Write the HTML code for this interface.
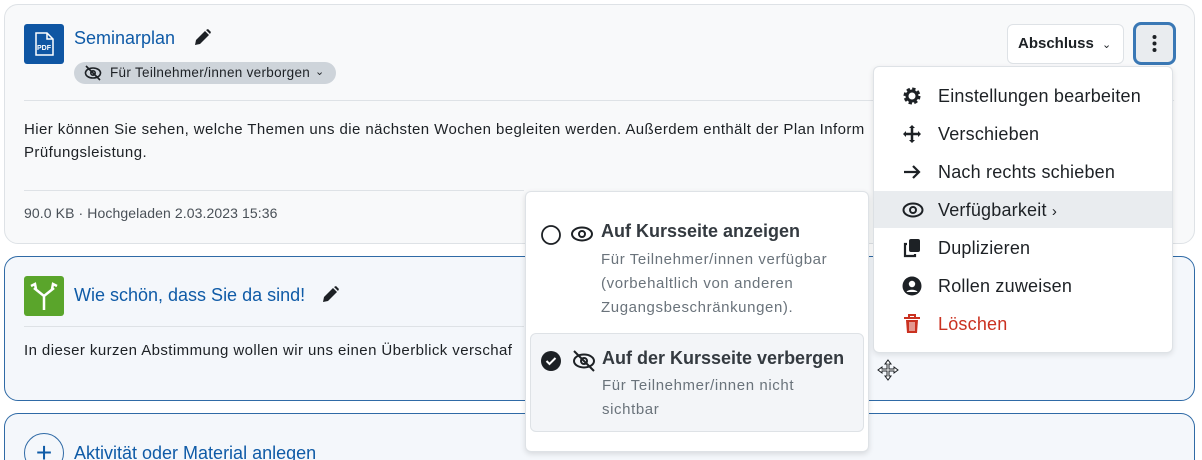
<!DOCTYPE html>
<html style="width:1202px;height:460px;overflow:hidden"><head><meta charset="utf-8"><style>
*{box-sizing:border-box;margin:0;padding:0}
body{width:1202px;height:460px;overflow:hidden;background:#fff;font-family:"Liberation Sans",sans-serif;color:#1d2125;font-size:15px;position:relative}
.abs{position:absolute}
.card{position:absolute;left:4px;width:1191px;border-radius:14px}
.link{color:#0f5ba7;font-size:18px}
.hr{position:absolute;height:1px;background:#dee2e6}
.mi{position:absolute;left:873px;width:299px;height:38px;font-size:18px;line-height:38px;padding-left:65px;color:#1d2125;letter-spacing:0.2px}
.mi svg{position:absolute;left:29px;top:9px}
</style></head><body>
<div class="card" style="top:4px;height:240px;background:#f8f9fa;border:1px solid #dee2e6"></div>
<div class="card" style="top:256px;height:145px;background:#f4f7fb;border:1px solid #2f6aa6"></div>
<div class="card" style="top:413px;height:47px;background:#f4f7fb;border:1px solid #2f6aa6;border-bottom:none;border-radius:14px 14px 0 0"></div>

<!-- card1 -->
<div class="abs" style="left:24px;top:24px;width:40px;height:40px;background:#0f56a3;border-radius:3px">
<svg width="40" height="40"><path d="M12 9h11l6 6v16h-17z" fill="none" stroke="#fff" stroke-width="1.5"/><path d="M23 9v6h6" fill="none" stroke="#fff" stroke-width="1.5"/><text x="20" y="26" fill="#fff" font-size="7" font-weight="bold" text-anchor="middle" font-family="Liberation Sans">PDF</text></svg></div>
<div class="abs link" style="left:74px;top:28px">Seminarplan</div>
<svg class="abs" style="left:192px;top:28px" width="20" height="20" viewBox="0 0 20 20"><path d="M3 17l1-5 9-9 4 4-9 9z M14 2l2-1 3 3-1 2z" fill="#1d2125"/></svg>
<div class="abs" style="left:74px;top:62px;width:262px;height:22px;border-radius:11px;background:#ced4da;font-size:13.5px;line-height:22px;padding-left:36px;color:#1d2125;letter-spacing:0.3px">Für Teilnehmer/innen verborgen<span style="position:absolute;left:241px;top:-1px;font-size:11px">&#8964;</span></div>
<svg class="abs" style="left:84px;top:65px" width="18" height="16" viewBox="0 0 18 16"><ellipse cx="9" cy="8" rx="7.5" ry="5" fill="none" stroke="#1d2125" stroke-width="1.6"/><circle cx="9" cy="8" r="2.2" fill="none" stroke="#1d2125" stroke-width="1.6"/><path d="M2 1l14 14" stroke="#1d2125" stroke-width="1.6"/></svg>
<div class="hr" style="left:24px;top:100px;width:1150px"></div>
<div class="abs" style="left:24px;top:118px;line-height:23px;width:860px;white-space:nowrap;letter-spacing:0.42px">Hier können Sie sehen, welche Themen uns die nächsten Wochen begleiten werden. Außerdem enthält der Plan Inform<br>Prüfungsleistung.</div>
<div class="hr" style="left:24px;top:190px;width:500px"></div>
<div class="abs" style="left:24px;top:205px;font-size:14px;color:#495057;letter-spacing:0.1px">90.0 KB · Hochgeladen 2.03.2023 15:36</div>

<div class="abs" style="left:1007px;top:24px;width:117px;height:40px;border:1px solid #dee2e6;border-radius:6px;background:#fff;font-weight:bold;line-height:38px;padding-left:10px;font-size:15px">Abschluss <span style="font-weight:normal;font-size:11px;margin-left:4px">&#8964;</span></div>
<div class="abs" style="left:1133px;top:22px;width:43px;height:43px;border:3px solid #3a78b5;border-radius:8px;background:#e9ecef">
<svg width="37" height="37"><circle cx="18.5" cy="12" r="2" fill="#1d2125"/><circle cx="18.5" cy="18.5" r="2" fill="#1d2125"/><circle cx="18.5" cy="25" r="2" fill="#1d2125"/></svg></div>

<!-- card2 -->
<div class="abs" style="left:24px;top:276px;width:40px;height:40px;background:#5aa52b;border-radius:3px">
<svg width="40" height="40"><path d="M20 34V20L10 12M20 20l10-8M7 10l4-2 1 5M33 10l-4-2-1 5" fill="none" stroke="#fff" stroke-width="2.5"/></svg></div>
<div class="abs link" style="left:74px;top:285px">Wie schön, dass Sie da sind!</div>
<svg class="abs" style="left:320px;top:285px" width="20" height="20" viewBox="0 0 20 20"><path d="M3 17l1-5 9-9 4 4-9 9z M14 2l2-1 3 3-1 2z" fill="#1d2125"/></svg>
<div class="hr" style="left:24px;top:326px;width:500px"></div>
<div class="abs" style="left:24px;top:342px;white-space:nowrap;letter-spacing:0.42px">In dieser kurzen Abstimmung wollen wir uns einen Überblick verschaf</div>
<div class="abs" style="left:24px;top:433px;width:40px;height:40px;border:1px solid #2f6aa6;border-radius:50%;color:#0f5ba7;font-size:28px;text-align:center;line-height:38px">+</div>
<div class="abs link" style="left:74px;top:443px">Aktivität oder Material anlegen</div>

<!-- menu -->
<div class="abs" style="left:873px;top:66px;width:300px;height:287px;background:#fff;border:1px solid #dee2e6;border-radius:6px;box-shadow:0 2px 6px rgba(0,0,0,.1)"></div>
<div class="abs" style="left:874px;top:191px;width:298px;height:37px;background:#e9ecef"></div>
<div class="mi" style="top:77px"><svg width="20" height="20" viewBox="0 0 20 20"><circle cx="10" cy="10" r="6.5" fill="none" stroke="#1d2125" stroke-width="4" stroke-dasharray="3 2.1"/><circle cx="10" cy="10" r="5" fill="none" stroke="#1d2125" stroke-width="3"/></svg>Einstellungen bearbeiten</div>
<div class="mi" style="top:115px"><svg width="20" height="20" viewBox="0 0 20 20"><path d="M10 1l3 3H7zM10 19l3-3H7zM1 10l3-3v6zM19 10l-3-3v6z" fill="#1d2125"/><path d="M10 3v14M3 10h14" stroke="#1d2125" stroke-width="2.5"/></svg>Verschieben</div>
<div class="mi" style="top:153px"><svg width="20" height="20" viewBox="0 0 20 20"><path d="M2 10h15M11 4l6 6-6 6" fill="none" stroke="#1d2125" stroke-width="2.2"/></svg>Nach rechts schieben</div>
<div class="mi" style="top:191px"><svg width="22" height="20" viewBox="0 0 22 20"><ellipse cx="11" cy="10" rx="9.5" ry="6.5" fill="none" stroke="#1d2125" stroke-width="2"/><circle cx="11" cy="10" r="3" fill="none" stroke="#1d2125" stroke-width="2"/></svg>Verfügbarkeit <span style="font-size:15px">›</span></div>
<div class="mi" style="top:229px"><svg width="20" height="20" viewBox="0 0 20 20"><rect x="7" y="1" width="11" height="13" rx="2" fill="#1d2125"/><path d="M5 6H3v12h10v-2" fill="none" stroke="#1d2125" stroke-width="2.2"/></svg>Duplizieren</div>
<div class="mi" style="top:267px"><svg width="20" height="20" viewBox="0 0 20 20"><circle cx="10" cy="10" r="9.5" fill="#1d2125"/><circle cx="10" cy="8" r="3.2" fill="#fff"/><path d="M4.5 16c1.5-3 9.5-3 11 0" fill="#fff"/></svg>Rollen zuweisen</div>
<div class="mi" style="top:305px;color:#ca3120"><svg width="20" height="20" viewBox="0 0 20 20"><path d="M2 4h16M7 3V1h6v2" stroke="#ca3120" stroke-width="2" fill="none"/><path d="M4 6h12l-1 13H5z" fill="#ca3120"/><path d="M8 8v9M10 8v9M12 8v9" stroke="#fff" stroke-width="1"/></svg>Löschen</div>

<!-- submenu -->
<div class="abs" style="left:525px;top:191px;width:344px;height:261px;background:#fff;border:1px solid #dee2e6;border-radius:6px;box-shadow:0 2px 6px rgba(0,0,0,.12)"></div>
<div class="abs" style="left:530px;top:333px;width:334px;height:99px;background:#f3f5f8;border:1px solid #dee2e6;border-radius:6px"></div>
<svg class="abs" style="left:540px;top:224px" width="22" height="22"><circle cx="11" cy="11" r="9" fill="none" stroke="#1d2125" stroke-width="1.8"/></svg>
<svg class="abs" style="left:570px;top:224px" width="24" height="20" viewBox="0 0 24 20"><ellipse cx="12" cy="10" rx="10" ry="6.5" fill="none" stroke="#1d2125" stroke-width="2"/><circle cx="12" cy="10" r="3" fill="none" stroke="#1d2125" stroke-width="2"/></svg>
<div class="abs" style="left:601px;top:221px;font-weight:bold;font-size:18px;color:#343a40">Auf Kursseite anzeigen</div>
<div class="abs" style="left:601px;top:248px;font-size:15px;line-height:24px;color:#6a737b;letter-spacing:0.6px;white-space:nowrap">Für Teilnehmer/innen verfügbar<br>(vorbehaltlich von anderen<br>Zugangsbeschränkungen).</div>
<svg class="abs" style="left:540px;top:350px" width="22" height="22"><circle cx="11" cy="11" r="10" fill="#1d2125"/><path d="M6.5 11l3 3 6-6" fill="none" stroke="#fff" stroke-width="2"/></svg>
<svg class="abs" style="left:571px;top:349px" width="26" height="24" viewBox="0 0 26 24"><ellipse cx="13" cy="12" rx="10" ry="6.5" fill="none" stroke="#1d2125" stroke-width="2"/><circle cx="13" cy="12" r="3" fill="none" stroke="#1d2125" stroke-width="2"/><path d="M3 2l20 20" stroke="#1d2125" stroke-width="2"/></svg>
<div class="abs" style="left:602px;top:348px;font-weight:bold;font-size:18px;color:#343a40">Auf der Kursseite verbergen</div>
<div class="abs" style="left:602px;top:374px;font-size:15px;line-height:24px;color:#6a737b;letter-spacing:0.6px;white-space:nowrap">Für Teilnehmer/innen nicht<br>sichtbar</div>
<svg class="abs" style="left:876px;top:358px" width="24" height="24" viewBox="0 0 24 24"><path d="M12 2l3 4h-2v5h5V9l4 3-4 3v-2h-5v5h2l-3 4-3-4h2v-5H6v2l-4-3 4-3v2h5V6H9z" fill="#fff" stroke="#1d2125" stroke-width="1"/></svg>
</body></html>
